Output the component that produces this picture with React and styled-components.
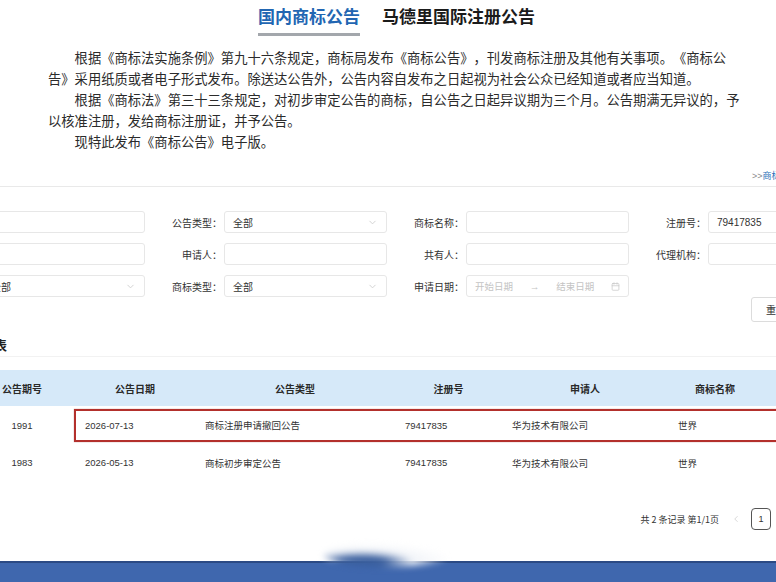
import React from 'react'
import styled, { createGlobalStyle } from 'styled-components'
import { ChevronDown, ChevronLeft, ChevronRight, Calendar } from 'lucide-react'

const Global = createGlobalStyle`
  html, body {
    margin: 0;
    padding: 0;
    background: #fff;
    overflow: hidden;
  }
  body {
    font-family: "Liberation Sans", "Noto Sans CJK SC", sans-serif;
    color: #333;
  }
`;

const Page = styled.div`
  width: 970px;
  margin-left: -97px;
  display: flex;
  flex-direction: column;
`;

const Tabs = styled.div`
  display: flex;
  gap: 22px;
  padding-left: 355px;
`;

const Tab = styled.div`
  font-family: "Noto Sans CJK SC", sans-serif;
  font-size: 17px;
  line-height: 20px;
  font-weight: 700;
  padding: 6px 0 7px;
  color: ${p => (p.$active ? '#2266b2' : '#1b1b1b')};
  border-bottom: 3px solid ${p => (p.$active ? '#a3a7ac' : 'transparent')};
`;

const Intro = styled.div`
  margin-top: 11px;
  padding-left: 145px;
  width: 695px;
`;

const P = styled.p`
  margin: 0;
  font-family: "Noto Sans CJK SC", sans-serif;
  font-size: 13.3px;
  line-height: 21px;
  text-indent: 2em;
  text-spacing-trim: space-all;
  color: #2b2b2b;
`;

const LinkRow = styled.div`
  margin-top: 18px;
  display: flex;
  padding: 0 0 4px 849px;
  font-size: 9px;
  line-height: 12px;
  border-bottom: 1px solid #e9e9e9;
  white-space: nowrap;
`;

const Arrow = styled.span`
  color: #8a8a8a;
`;

const MoreLink = styled.span`
  color: #2a6fb8;
`;

const FormGrid = styled.div`
  margin-top: 24px;
  display: grid;
  grid-template-columns: repeat(4, 242px);
  row-gap: 10px;
`;

const Field = styled.div`
  display: flex;
  align-items: center;
`;

const Label = styled.span`
  width: 79px;
  padding-right: 2px;
  box-sizing: border-box;
  text-align: right;
  font-size: 10px;
  color: #333;
  white-space: nowrap;
`;

const Box = styled.div`
  width: 163px;
  height: 22px;
  box-sizing: border-box;
  border: 1px solid #e7e7e7;
  border-radius: 3px;
  display: flex;
  align-items: center;
  justify-content: space-between;
  padding: 0 8px;
  font-size: 10px;
  color: #333;
`;

const Hint = styled.span`
  color: #c4c4c4;
  font-size: 9.5px;
`;

const ButtonRow = styled.div`
  display: flex;
  gap: 8px;
  padding-left: 848px;
`;

const Button = styled.button`
  height: 25px;
  width: 50px;
  border: 1px solid #dcdcdc;
  border-radius: 3px;
  background: #fff;
  font-family: "Noto Sans CJK SC", sans-serif;
  font-size: 10px;
  color: #333;
  padding: 0;
`;

const Heading = styled.div`
  margin-top: 14px;
  padding: 0 0 2px 52px;
  font-family: "Noto Sans CJK SC", sans-serif;
  font-size: 13px;
  line-height: 18px;
  font-weight: 700;
  color: #222;
  border-bottom: 1px solid #f2f2f2;
`;

const Table = styled.div`
  margin-top: 13px;
  display: flex;
  flex-direction: column;
`;

const COLS = '66px 106px 120px 200px 107px 166px 94px 111px';

const HeadRow = styled.div`
  display: grid;
  grid-template-columns: ${COLS};
  height: 36px;
  align-items: center;
  background: #d6e9f9;
`;

const HeadCell = styled.div`
  text-align: center;
  font-family: "Noto Sans CJK SC", sans-serif;
  font-size: 10px;
  font-weight: 700;
  color: #2a2a2a;
`;

const Row = styled.div`
  position: relative;
  display: grid;
  grid-template-columns: ${COLS};
  height: ${p => p.$h}px;
  align-items: center;
  &::after {
    content: '';
    display: ${p => (p.$marked ? 'block' : 'none')};
    position: absolute;
    left: 171px;
    right: 0;
    top: 3px;
    bottom: 2px;
    border: 2px solid #b3302c;
    box-shadow: 0 0 1px rgba(120, 20, 20, 0.5);
  }
`;

const Cell = styled.div`
  font-size: 9.5px;
  color: #333;
  padding-left: 10px;
  text-align: ${p => (p.$center ? 'center' : 'left')};
  ${p => p.$center && 'padding-left: 0;'}
  white-space: nowrap;
`;

const Pager = styled.div`
  margin-top: 27px;
  display: flex;
  align-items: center;
  justify-content: flex-end;
  padding-right: 80px;
  height: 22px;
  font-size: 9px;
  color: #333;
`;

const PagerText = styled.span`
  margin-right: 12px;
  font-family: "Noto Sans CJK SC", sans-serif;
  font-size: 9px;
`;

const PageNum = styled.div`
  width: 20px;
  height: 22px;
  box-sizing: border-box;
  border: 1px solid #555;
  border-radius: 4px;
  display: flex;
  align-items: center;
  justify-content: center;
  margin: 0 12px 0 10px;
  font-size: 9px;
`;

const Footer = styled.div`
  position: relative;
  margin-top: 31px;
  height: 30px;
  background: #3f67ae;
  border-top: 2px solid #2b4a84;
  &::before {
    content: '';
    position: absolute;
    left: 420px;
    top: -20px;
    width: 130px;
    height: 24px;
    border-radius: 50%;
    background: radial-gradient(ellipse at 30% 80%, #3a5f9e 0 18%, rgba(240, 243, 248, 0.9) 40%, rgba(255, 255, 255, 0) 72%);
    filter: blur(3px);
  }
`;

const rows = [
  { no: '1', issue: '1991', date: '2026-07-13', type: '商标注册申请撤回公告', reg: '79417835', who: '华为技术有限公司', name: '世界', h: 38, marked: true },
  { no: '2', issue: '1983', date: '2026-05-13', type: '商标初步审定公告', reg: '79417835', who: '华为技术有限公司', name: '世界', h: 37 },
];

const App = () => {
  return (
    <Page>
      <Global />
      <Tabs>
        <Tab $active>国内商标公告</Tab>
        <Tab>马德里国际注册公告</Tab>
      </Tabs>

      <Intro>
        <P>根据《商标法实施条例》第九十六条规定，商标局发布《商标公告》，刊发商标注册及其他有关事项。《商标公告》采用纸质或者电子形式发布。除送达公告外，公告内容自发布之日起视为社会公众已经知道或者应当知道。</P>
        <P>根据《商标法》第三十三条规定，对初步审定公告的商标，自公告之日起异议期为三个月。公告期满无异议的，予以核准注册，发给商标注册证，并予公告。</P>
        <P>现特此发布《商标公告》电子版。</P>
      </Intro>

      <LinkRow>
        <Arrow>&gt;&gt;</Arrow>
        <MoreLink>商标公告查询说明</MoreLink>
      </LinkRow>

      <FormGrid>
        <Field><Label>公告期号：</Label><Box /></Field>
        <Field><Label>公告类型：</Label><Box>全部<ChevronDown size={11} color="#cfcfcf" /></Box></Field>
        <Field><Label>商标名称：</Label><Box /></Field>
        <Field><Label>注册号：</Label><Box>79417835</Box></Field>

        <Field><Label>公告日期：</Label><Box /></Field>
        <Field><Label>申请人：</Label><Box /></Field>
        <Field><Label>共有人：</Label><Box /></Field>
        <Field><Label>代理机构：</Label><Box /></Field>

        <Field><Label>国际分类：</Label><Box>全部<ChevronDown size={11} color="#cfcfcf" /></Box></Field>
        <Field><Label>商标类型：</Label><Box>全部<ChevronDown size={11} color="#cfcfcf" /></Box></Field>
        <Field>
          <Label>申请日期：</Label>
          <Box>
            <Hint>开始日期</Hint>
            <Hint>→</Hint>
            <Hint>结束日期</Hint>
            <Calendar size={9} color="#c8c8c8" />
          </Box>
        </Field>
      </FormGrid>

      <ButtonRow>
        <Button>重置</Button>
        <Button>查询</Button>
      </ButtonRow>

      <Heading>公告列表</Heading>

      <Table>
        <HeadRow>
          <HeadCell>序号</HeadCell>
          <HeadCell>公告期号</HeadCell>
          <HeadCell>公告日期</HeadCell>
          <HeadCell>公告类型</HeadCell>
          <HeadCell>注册号</HeadCell>
          <HeadCell>申请人</HeadCell>
          <HeadCell>商标名称</HeadCell>
          <HeadCell>操作</HeadCell>
        </HeadRow>
        {rows.map(r => (
          <Row key={r.no} $h={r.h} $marked={r.marked}>
            <Cell $center>{r.no}</Cell>
            <Cell $center>{r.issue}</Cell>
            <Cell>{r.date}</Cell>
            <Cell>{r.type}</Cell>
            <Cell>{r.reg}</Cell>
            <Cell>{r.who}</Cell>
            <Cell>{r.name}</Cell>
            <Cell $center>查看</Cell>
          </Row>
        ))}
      </Table>

      <Pager>
        <PagerText>共 2 条记录 第1/1页</PagerText>
        <ChevronLeft size={10} color="#d0d0d0" />
        <PageNum>1</PageNum>
        <ChevronRight size={10} color="#d0d0d0" />
      </Pager>

      <Footer />
    </Page>
  )
}

export default App
